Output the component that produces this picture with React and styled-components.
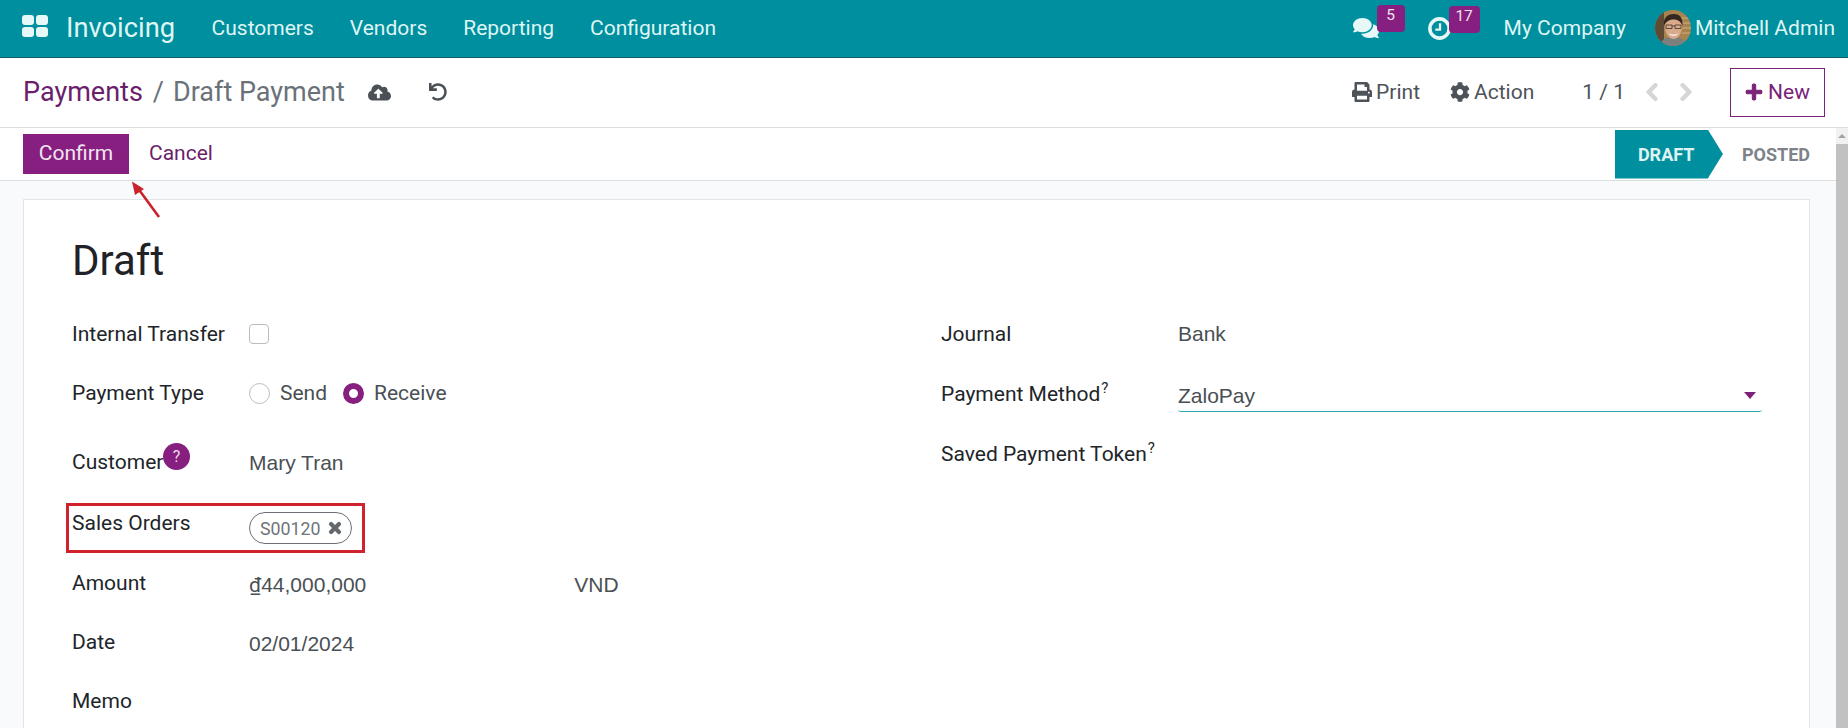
import React from 'react'
import styled, { createGlobalStyle } from 'styled-components'
import {
  FaCloudUploadAlt,
  FaCog,
  FaComments,
  FaPlus,
  FaPrint,
  FaTimes,
  FaUndo,
  FaChevronLeft,
  FaChevronRight,
} from 'react-icons/fa'

const GlobalStyle = createGlobalStyle`
  html, body {
    margin: 0;
    padding: 0;
    height: 100%;
    overflow: hidden;
    background: #fff;
    font-family: Roboto, "Noto Sans", sans-serif;
  }
`

const Page = styled.div`
  width: 1848px;
  height: 728px;
  display: flex;
  flex-direction: column;
  overflow: hidden;
`

const Navbar = styled.header`
  height: 58px;
  flex: none;
  display: flex;
  align-items: center;
  padding: 0 13px 1px 22px;
  box-sizing: border-box;
  background: #008f9e;
  border-bottom: 1px solid #04606a;
  color: #dff6f5;
`

const AppsIcon = styled.div`
  width: 26px;
  height: 22px;
  display: grid;
  grid-template-columns: 1fr 1fr;
  gap: 2px;
  margin-right: 18px;
  margin-top: -4px;

  span {
    background: #e6f8f7;
    border-radius: 3px;
  }
`

const Brand = styled.div`
  font-size: 27.3px;
  margin-right: 36.5px;
`

const NavItem = styled.div`
  font-size: 21px;
  margin-right: ${props => props.$gap ?? 36}px;
`

const NavRight = styled.div`
  margin-left: auto;
  display: flex;
  align-items: center;
`

const NavIcon = styled.div`
  position: relative;
  display: flex;
  align-items: center;
  margin-right: ${props => props.$gap}px;
  font-size: ${props => props.$size}px;
  color: #e6f8f7;
`

const Counter = styled.span`
  position: absolute;
  left: ${props => props.$left}px;
  top: ${props => props.$top}px;
  width: ${props => props.$width}px;
  height: 27px;
  display: flex;
  justify-content: center;
  padding-top: 1px;
  box-sizing: border-box;
  background: #871f80;
  border-radius: 4px;
  color: #efe3ee;
  font-size: 15.5px;
`

const ClockIcon = styled.svg`
  width: 23px;
  height: 23px;
`

const Avatar = styled.svg`
  width: 36px;
  height: 36px;
  margin: 0 4px 0 29px;
  border-radius: 50%;
`

const ControlPanel = styled.div`
  height: 70px;
  flex: none;
  display: flex;
  align-items: center;
  padding: 0 23px 1px;
  background: #fff;
  border-bottom: 1px solid #dcdfe2;
  box-sizing: border-box;
`

const Crumb = styled.span`
  font-size: 27px;
  color: ${props => (props.$link ? '#6b1f6b' : '#6a7279')};
  margin-right: ${props => props.$gap || 0}px;
`

const PanelIcon = styled.span`
  display: flex;
  font-size: ${props => props.$size}px;
  color: #4a5056;
  margin-right: ${props => props.$gap}px;
`

const PanelRight = styled.div`
  margin-left: auto;
  display: flex;
  align-items: center;
  font-size: 21px;
  color: #4d5359;
`

const PanelAction = styled.div`
  display: flex;
  align-items: center;
  gap: 4px;
  margin-right: ${props => props.$gap}px;

  svg {
    font-size: 20px;
  }
`

const Pager = styled.div`
  margin-right: 17px;
`

const PagerArrow = styled.span`
  display: flex;
  font-size: 20px;
  color: #d4d6d8;
  margin-right: ${props => props.$gap}px;

  svg {
    stroke: currentColor;
    stroke-width: 30;
  }
`

const NewButton = styled.button`
  width: 95px;
  height: 49px;
  display: flex;
  align-items: center;
  justify-content: center;
  gap: 5px;
  padding: 0;
  background: #fff;
  border: 1px solid #7a2278;
  color: #7a2278;
  font: inherit;
  font-size: 21px;

  svg {
    font-size: 18px;
    stroke: currentColor;
    stroke-width: 30;
  }
`

const Body = styled.div`
  flex: 1;
  min-height: 0;
  display: flex;
`

const Main = styled.main`
  flex: 1;
  min-width: 0;
  display: flex;
  flex-direction: column;
  background: #f9fafb;
`

const StatusRow = styled.div`
  height: 53px;
  flex: none;
  position: relative;
  display: flex;
  align-items: center;
  padding-left: 23px;
  background: #fff;
  border-bottom: 1px solid #dcdfe2;
  box-sizing: border-box;
`

const ConfirmButton = styled.button`
  width: 106px;
  height: 40px;
  padding: 0 0 2px;
  border: none;
  background: #871f80;
  color: #f1e6f0;
  font: inherit;
  font-size: 21px;
`

const CancelButton = styled.button`
  margin-left: 20px;
  padding: 0 0 2px;
  border: none;
  background: none;
  color: #6b1f6b;
  font: inherit;
  font-size: 21px;
`

const StatusBar = styled.div`
  margin-left: auto;
  display: flex;
  align-items: center;
`

const StatusActive = styled.div`
  width: 108px;
  height: 49px;
  display: flex;
  align-items: center;
  padding-left: 23px;
  box-sizing: border-box;
  background: #008f9e;
  clip-path: polygon(0 0, 86% 0, 100% 50%, 86% 100%, 0 100%);
  color: #dff3f3;
  font-size: 18px;
  font-weight: 700;
`

const StatusNext = styled.div`
  padding: 0 26px 0 19px;
  color: #7d8389;
  font-size: 18px;
  font-weight: 700;
`

const Arrow = styled.svg`
  position: absolute;
  left: 126px;
  top: 50px;
  width: 38px;
  height: 46px;
`

const Content = styled.div`
  flex: 1;
  min-height: 0;
  padding: 18px 26px 0 23px;
`

const Sheet = styled.section`
  height: 100%;
  box-sizing: border-box;
  padding: 31px 47px 0 48px;
  background: #fff;
  border: 1px solid #e3e5e8;
  border-bottom: none;
`

const Title = styled.h1`
  margin: 0 0 28px;
  font-size: 42px;
  line-height: 60px;
  font-weight: 400;
  color: #1f2327;
`

const FormGrid = styled.div`
  display: grid;
  grid-template-columns: 869px 1fr;
`

const Group = styled.div`
  display: flex;
  flex-direction: column;
`

const Row = styled.div`
  position: relative;
  height: ${props => props.$height}px;
  display: flex;
  align-items: flex-start;
`

const Label = styled.div`
  width: ${props => props.$width || 177}px;
  flex: none;
  font-size: 21px;
  line-height: 30px;
  color: #212529;
`

const Hint = styled.sup`
  font-size: 15px;
  line-height: 0;
  margin-left: 1px;
`

const HelpBadge = styled.span`
  position: absolute;
  left: 91px;
  top: -4px;
  width: 27px;
  height: 27px;
  display: flex;
  align-items: center;
  justify-content: center;
  border-radius: 50%;
  background: #871f80;
  color: #eadbe9;
  font-size: 16px;
`

const Value = styled.div`
  font-family: "Liberation Sans", Arial, sans-serif;
  font-size: 21px;
  line-height: 30px;
  color: #4a4f54;
  margin-top: ${props => props.$top || 0}px;
  margin-right: ${props => props.$gap || 0}px;
`

const CurrencySymbol = styled.span`
  font-family: Roboto, sans-serif;
`

const Checkbox = styled.span`
  width: 20px;
  height: 20px;
  margin-top: 5px;
  border: 1px solid #b9bcc0;
  border-radius: 4px;
  box-sizing: border-box;
`

const RadioGroup = styled.div`
  display: flex;
  align-items: center;
  height: 30px;
`

const Radio = styled.span`
  width: 21px;
  height: 21px;
  box-sizing: border-box;
  border-radius: 50%;
  border: ${props => (props.$checked ? '6px solid #871f80' : '1px solid #b9bcc0')};
  margin-right: 10px;
`

const RadioLabel = styled.span`
  font-size: 21px;
  color: #4a4f54;
  margin-right: ${props => props.$gap || 0}px;
`

const Highlight = styled.div`
  position: absolute;
  left: -6px;
  top: -5px;
  width: 299px;
  height: 50px;
  border: 3px solid #d0212c;
  box-sizing: border-box;
`

const Tag = styled.span`
  height: 32px;
  margin-top: 4px;
  display: inline-flex;
  align-items: center;
  gap: 6px;
  padding: 0 8px 0 10px;
  box-sizing: border-box;
  border: 1px solid #6c7177;
  border-radius: 16px;
  color: #6f757a;
  font-size: 17.8px;

  svg {
    font-size: 16px;
    color: #63686d;
    stroke: currentColor;
    stroke-width: 40;
  }
`

const SelectField = styled.div`
  flex: 1;
  height: 32px;
  margin-top: 1px;
  box-sizing: border-box;
  display: flex;
  align-items: center;
  justify-content: space-between;
  border-bottom: 1px solid #2fa8ad;
  border-radius: 0 0 3px 3px;
  font-family: "Liberation Sans", Arial, sans-serif;
  font-size: 21px;
  color: #4a4f54;
`

const Caret = styled.span`
  width: 0;
  height: 0;
  margin-right: 6px;
  border-left: 6px solid transparent;
  border-right: 6px solid transparent;
  border-top: 7px solid #7a2278;
`

const Scrollbar = styled.div`
  width: 12px;
  flex: none;
  display: flex;
  flex-direction: column;
  background: #f1f1f1;
`

const ScrollButton = styled.div`
  height: 16px;
  flex: none;
  display: flex;
  justify-content: center;
  padding-top: 6px;
  box-sizing: border-box;

  &::before {
    content: '';
    border-left: 4px solid transparent;
    border-right: 4px solid transparent;
    border-bottom: 4px solid #a3a3a3;
    height: 0;
  }
`

const ScrollThumb = styled.div`
  flex: 1;
  background: #c1c1c1;
`

const navItems = ['Customers', 'Vendors', 'Reporting', 'Configuration']

const App = () => {
  return (
    <Page>
      <GlobalStyle />
      <Navbar>
        <AppsIcon>
          <span />
          <span />
          <span />
          <span />
        </AppsIcon>
        <Brand>Invoicing</Brand>
        {navItems.map(item => (
          <NavItem key={item}>{item}</NavItem>
        ))}
        <NavRight>
          <NavIcon $size={26} $gap={49}>
            <FaComments />
            <Counter $left={24} $top={-10} $width={28}>5</Counter>
          </NavIcon>
          <NavIcon $size={23} $gap={53}>
            <ClockIcon viewBox="0 0 22 22">
              <circle cx="11" cy="11" r="9.2" fill="none" stroke="currentColor" strokeWidth="3.4" />
              <path d="M11.5 6v6H7" fill="none" stroke="currentColor" strokeWidth="2.2" />
            </ClockIcon>
            <Counter $left={21} $top={-11} $width={31}>17</Counter>
          </NavIcon>
          <NavItem $gap={0}>My Company</NavItem>
          <Avatar viewBox="0 0 36 36">
            <rect width="36" height="36" fill="#a8824f" />
            <path d="M25 8h11M26 13h10M27 18h9M27 23h9" stroke="#cfae78" strokeWidth="1.2" />
            <path d="M0 0h9v36H0z" fill="#5f4a33" />
            <path d="M5 36c1-7 6-9 13-9s12 2 13 9z" fill="#7b7f7d" />
            <path d="M10 16c0-6 4-9 8.500-9s8.500 3 8.500 9c0 8-4 13-8.500 13s-8.500-5-8.500-13z" fill="#d9a98c" />
            <path d="M9 16C8 7 13 4 19 4s9 4 8.500 12c-1.500-4-4-6.500-9-6.500-4.500 0-8 2.500-9.500 6.500z" fill="#33271f" />
            <path d="M11 15h6v3.500h-6zM20 15h6v3.500h-6zM17 16h3" fill="none" stroke="#40332b" strokeWidth="0.8" />
            <path d="M14 23c2.500 2 6.500 2 9 0l-1 2c-2 1.200-5.500 1.200-7 0z" fill="#f4efe9" />
          </Avatar>
          <NavItem $gap={0}>Mitchell Admin</NavItem>
        </NavRight>
      </Navbar>

      <ControlPanel>
        <Crumb $link $gap={10}>Payments</Crumb>
        <Crumb $gap={9}>/</Crumb>
        <Crumb $gap={23}>Draft Payment</Crumb>
        <PanelIcon $size={23} $gap={38}>
          <FaCloudUploadAlt />
        </PanelIcon>
        <PanelIcon $size={18} $gap={0}>
          <FaUndo />
        </PanelIcon>
        <PanelRight>
          <PanelAction $gap={30}>
            <FaPrint />
            Print
          </PanelAction>
          <PanelAction $gap={48}>
            <FaCog />
            Action
          </PanelAction>
          <Pager>1 / 1</Pager>
          <PagerArrow $gap={14}>
            <FaChevronLeft />
          </PagerArrow>
          <PagerArrow $gap={34}>
            <FaChevronRight />
          </PagerArrow>
          <NewButton>
            <FaPlus />
            New
          </NewButton>
        </PanelRight>
      </ControlPanel>

      <Body>
        <Main>
          <StatusRow>
            <ConfirmButton>Confirm</ConfirmButton>
            <CancelButton>Cancel</CancelButton>
            <StatusBar>
              <StatusActive>DRAFT</StatusActive>
              <StatusNext>POSTED</StatusNext>
            </StatusBar>
            <Arrow viewBox="0 0 38 46">
              <path d="M33 39 L11 9" stroke="#c9242b" strokeWidth="2.6" />
              <path d="M6 3.500 L18 11 L9 17 Z" fill="#c9242b" />
            </Arrow>
          </StatusRow>
          <Content>
            <Sheet>
              <Title>Draft</Title>
              <FormGrid>
                <Group>
                  <Row $height={59}>
                    <Label>Internal Transfer</Label>
                    <Checkbox />
                  </Row>
                  <Row $height={69}>
                    <Label>Payment Type</Label>
                    <RadioGroup>
                      <Radio />
                      <RadioLabel $gap={16}>Send</RadioLabel>
                      <Radio $checked />
                      <RadioLabel>Receive</RadioLabel>
                    </RadioGroup>
                  </Row>
                  <Row $height={61}>
                    <Label>
                      Customer
                      <HelpBadge>?</HelpBadge>
                    </Label>
                    <Value $top={1}>Mary Tran</Value>
                  </Row>
                  <Row $height={60}>
                    <Highlight />
                    <Label>Sales Orders</Label>
                    <Tag>
                      S00120
                      <FaTimes />
                    </Tag>
                  </Row>
                  <Row $height={59}>
                    <Label>Amount</Label>
                    <Value $top={2} $gap={208}><CurrencySymbol>₫</CurrencySymbol>44,000,000</Value>
                    <Value $top={2}>VND</Value>
                  </Row>
                  <Row $height={59}>
                    <Label>Date</Label>
                    <Value $top={2}>02/01/2024</Value>
                  </Row>
                  <Row $height={40}>
                    <Label>Memo</Label>
                  </Row>
                </Group>
                <Group>
                  <Row $height={60}>
                    <Label $width={237}>Journal</Label>
                    <Value>Bank</Value>
                  </Row>
                  <Row $height={60}>
                    <Label $width={237}>
                      Payment Method<Hint>?</Hint>
                    </Label>
                    <SelectField>
                      ZaloPay
                      <Caret />
                    </SelectField>
                  </Row>
                  <Row $height={60}>
                    <Label $width={237}>
                      Saved Payment Token<Hint>?</Hint>
                    </Label>
                  </Row>
                </Group>
              </FormGrid>
            </Sheet>
          </Content>
        </Main>
        <Scrollbar>
          <ScrollButton />
          <ScrollThumb />
        </Scrollbar>
      </Body>
    </Page>
  )
}

export default App
